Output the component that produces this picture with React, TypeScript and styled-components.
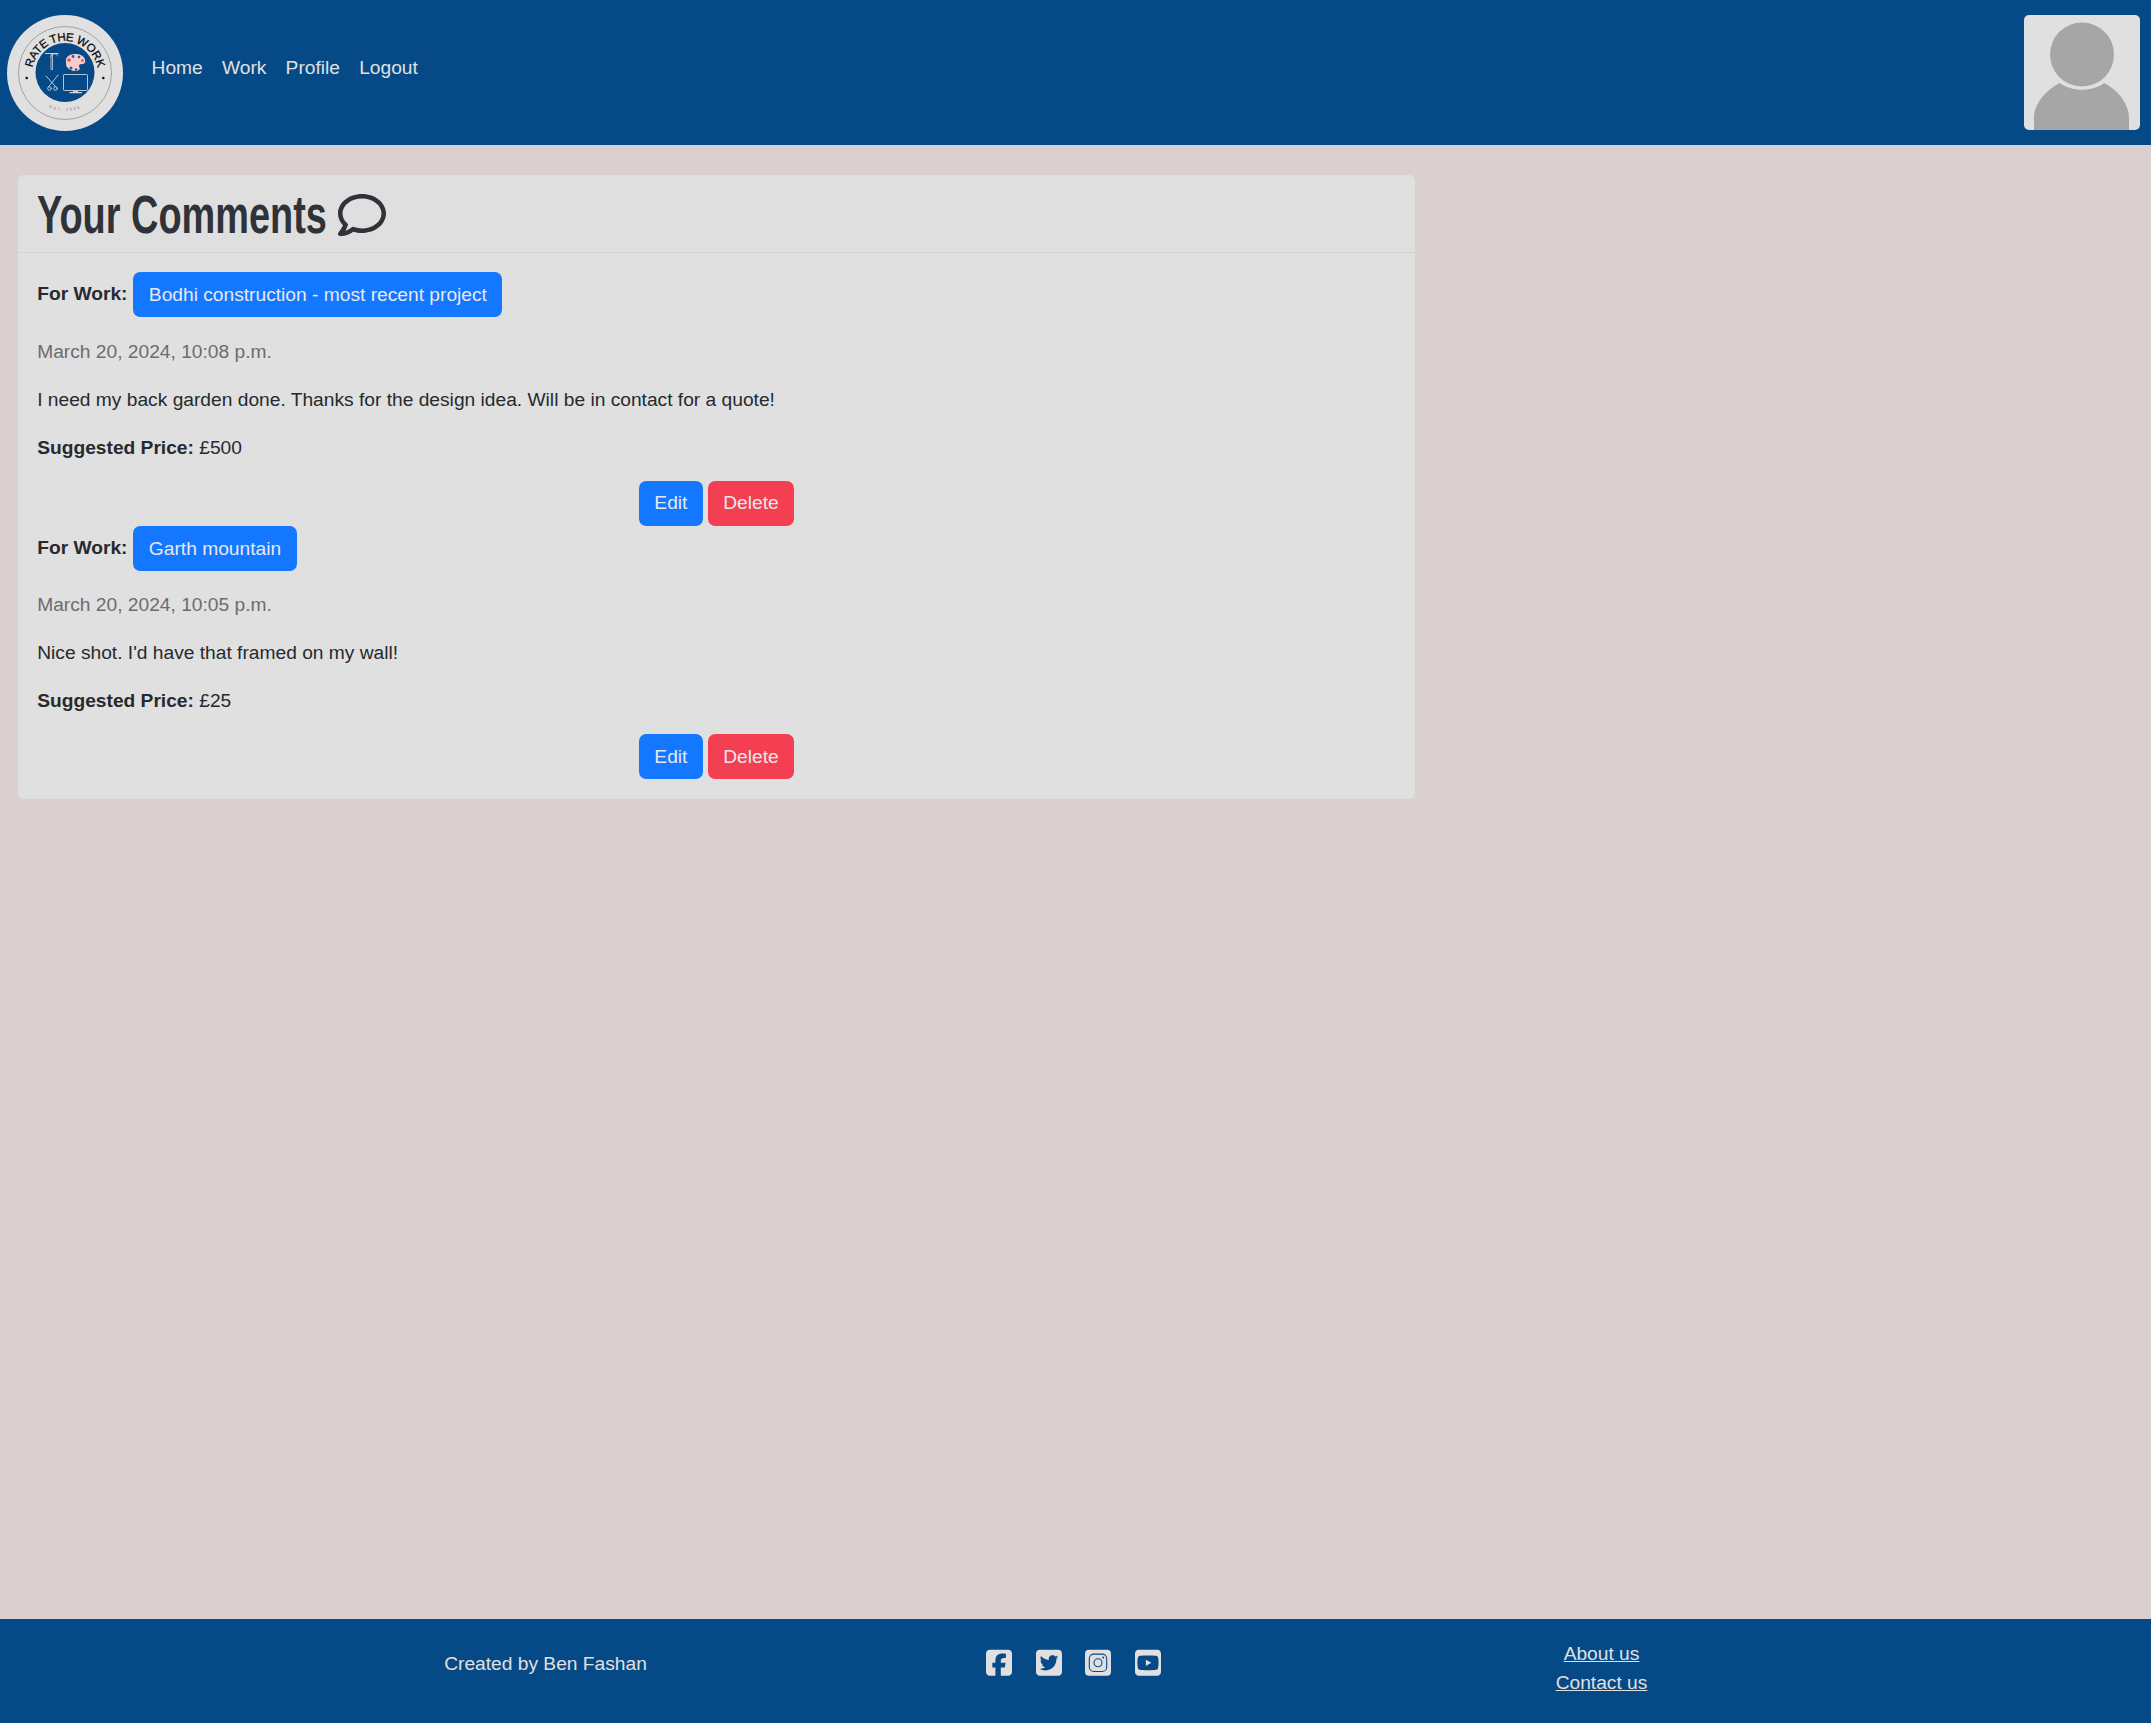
import React from "react";
import styled, { createGlobalStyle } from "styled-components";
import { FaRegComment } from "react-icons/fa";
import { FaSquareFacebook, FaSquareTwitter, FaSquareYoutube } from "react-icons/fa6";

const Global = createGlobalStyle`
  html, body { margin: 0; padding: 0; }
  body {
    background: #dbd0d0;
    font-family: "Liberation Sans", Arial, sans-serif;
    font-size: 19.2px;
    line-height: 1.5;
    color: #262a2e;
  }
  * { box-sizing: border-box; }
`;

const Page = styled.div`
  min-height: 1723px;
  display: flex;
  flex-direction: column;
`;

const Header = styled.header`
  height: 145px;
  background: #064987;
  display: flex;
  align-items: center;
  justify-content: space-between;
  padding: 0 11px 0 7px;
`;

const Brand = styled.div`
  display: flex;
  align-items: center;
`;

const LogoSvg = styled.svg`
  width: 116px;
  height: 116px;
  display: block;
`;

const Nav = styled.nav`
  display: flex;
  margin-left: 19px;
  padding-bottom: 9px;
`;

const NavLink = styled.a`
  color: #e0e0e0;
  padding: 0 9.6px;
  text-decoration: none;
`;

const Avatar = styled.svg`
  width: 116px;
  height: 115.5px;
  display: block;
  border-radius: 5px;
`;

const Main = styled.main`
  flex: 1;
  padding: 30px 0 0 18px;
`;

const Card = styled.section`
  width: 1397px;
  background: #e0e0e0;
  border-radius: 6px;
  overflow: hidden;
`;

const CardHeader = styled.div`
  height: 78px;
  display: flex;
  align-items: center;
  gap: 12px;
  padding: 3px 19.2px 0;
  background: #dfdfdf;
  border-bottom: 1px solid #d3d3d3;
`;

const Title = styled.h2`
  margin: 0;
  width: 289px;
  white-space: nowrap;
  font-family: "Liberation Sans", Arial, sans-serif;
  font-size: 53px;
  font-weight: 700;
  line-height: 1.2;
  color: #2f3238;
  transform: scaleX(0.715);
  transform-origin: left center;
`;

const CommentIcon = styled(FaRegComment)`
  width: 48px;
  height: 48px;
  color: #2f3238;
`;

const CardBody = styled.div`
  padding: 19.2px 19.2px 20.2px;
`;

const WorkRow = styled.div`
  display: flex;
  align-items: center;
  gap: 6px;
  margin-bottom: 20.2px;
`;

const Bold = styled.strong`
  font-weight: 700;
`;

const Button = styled.a<{ $variant: "primary" | "danger" }>`
  display: inline-block;
  padding: 8.8px 15.4px 7.6px;
  border-radius: 7.2px;
  color: #e8e8ee;
  text-decoration: none;
  background: ${(p) => (p.$variant === "primary" ? "#1477ff" : "#f43f52")};
`;

const Muted = styled.p`
  margin: 0 0 19.2px;
  color: #6c6c70;
`;

const Para = styled.p`
  margin: 0 0 19.2px;
`;

const Actions = styled.div`
  display: flex;
  justify-content: center;
  gap: 5px;
  margin-top: -1px;
`;

const Footer = styled.footer`
  height: 104px;
  background: #064987;
  color: #e0e0e0;
  display: flex;
  justify-content: center;
  padding-right: 4px;
`;

const FooterGrid = styled.div`
  width: 1584px;
  display: grid;
  grid-template-columns: repeat(3, 1fr);
  text-align: center;
`;

const Credit = styled.div`
  padding-top: 31px;
`;

const Socials = styled.div`
  padding-top: 29px;
  display: flex;
  justify-content: center;
  gap: 23.6px;
  color: #e0e0e0;
  svg {
    width: 26px;
    height: 29.7px;
    display: block;
  }
`;

const FooterLinks = styled.div`
  padding-top: 20px;
  display: flex;
  flex-direction: column;
  align-items: center;
  line-height: 29px;
`;

const FooterLink = styled.a`
  color: #e0e0e0;
  text-decoration: underline;
`;

const InstagramIcon = () => (
  <svg viewBox="0 0 26 29.7">
    <rect x="0" y="1.85" width="26" height="26" rx="4" fill="currentColor" />
    <rect x="4.3" y="6.1" width="17.4" height="17.4" rx="4.5" fill="none" stroke="#064987" strokeWidth="1.1" />
    <circle cx="13" cy="14.8" r="4" fill="none" stroke="#064987" strokeWidth="1.1" />
    <circle cx="18.2" cy="9.6" r="1" fill="#064987" />
  </svg>
);

const Logo = () => (
  <LogoSvg viewBox="0 0 116 116">
    <circle cx="58" cy="58" r="58" fill="#e0e0e0" />
    <circle cx="58" cy="58" r="46.5" fill="none" stroke="#777" strokeWidth="0.6" />
    <circle cx="58" cy="57.5" r="29.5" fill="#064987" />
    <defs>
      <path id="arcTop" d="M 25 59 A 33 33 0 0 1 91 59" />
      <path id="arcBottom" d="M 16 54 A 42 42 0 1 0 100 54" />
    </defs>
    <text fontFamily="Liberation Sans, sans-serif" fontSize="11.5" fill="#0a0a0a" stroke="#0a0a0a" strokeWidth="0.25" letterSpacing="-0.3">
      <textPath href="#arcTop" startOffset="50%" textAnchor="middle">RATE THE WORK</textPath>
    </text>
    <text fontFamily="Liberation Sans, sans-serif" fontSize="4" fill="#777" letterSpacing="1.6">
      <textPath href="#arcBottom" startOffset="50%" textAnchor="middle">EST. 2024</textPath>
    </text>
    <circle cx="19.7" cy="63" r="1.3" fill="#111" />
    <circle cx="96.3" cy="63" r="1.3" fill="#111" />
    <g stroke="#c9d2de" fill="none" strokeLinecap="round">
      <path d="M38.5 38.5 H51" strokeWidth="1.2" />
      <path d="M43.5 41.5 C46 38 49 38 51 41" strokeWidth="0.9" />
      <path d="M44 39 V54.5 H45.5 V39" strokeWidth="0.8" />
    </g>
    <path d="M59 46.5 C58 41 64 38.5 70 39 C77 39.5 79 45 78 47.5 C77 50 72 48 72 51 C72 53 74 53 72 55 C68 57.5 62 55 60 52 C59 51 59 48 59 46.5 Z" fill="#f7cdcd" />
    <g>
      <circle cx="66" cy="41.5" r="1.4" fill="#2d5aa8" />
      <circle cx="72" cy="42" r="1.3" fill="#2d5aa8" />
      <circle cx="62" cy="45" r="1.7" fill="#ef4444" />
      <circle cx="75.5" cy="45.5" r="1.3" fill="#ef4444" />
      <circle cx="64" cy="53" r="1.5" fill="#2d5aa8" />
      <circle cx="69" cy="54.5" r="1.3" fill="#2d5aa8" />
    </g>
    <g stroke="#c9d2de" fill="none" strokeWidth="0.9" strokeLinecap="round">
      <path d="M39 61 L49 72" />
      <path d="M51 60 L41.5 72" />
      <circle cx="42.5" cy="73.5" r="1.8" />
      <circle cx="48.5" cy="73.5" r="1.8" />
    </g>
    <rect x="56.5" y="59.5" width="24" height="16" rx="0.8" fill="none" stroke="#c9d2de" strokeWidth="0.9" />
    <path d="M66 75.5 H71 V77 H75 V78.2 H62.5 V77 H66 Z" fill="#c9d2de" />
  </LogoSvg>
);

const Profile = () => (
  <Avatar viewBox="0 0 116 115.5" preserveAspectRatio="none">
    <rect width="116" height="115.5" fill="#e0e0e0" />
    <circle cx="58" cy="39.5" r="32" fill="#a6a6a6" />
    <path d="M10 115.5 V103 C10 89 21 76 35.5 68 C48 77 68 77 80.5 68 C95 76 105 89 105 103 V115.5 Z" fill="#a6a6a6" />
  </Avatar>
);

const comments = [
  { work: "Bodhi construction - most recent project", date: "March 20, 2024, 10:08 p.m.", text: "I need my back garden done. Thanks for the design idea. Will be in contact for a quote!", price: "£500" },
  { work: "Garth mountain", date: "March 20, 2024, 10:05 p.m.", text: "Nice shot. I'd have that framed on my wall!", price: "£25" },
];

export default function App() {
  return (
    <Page>
      <Global />
      <Header>
        <Brand>
          <Logo />
          <Nav>
            <NavLink>Home</NavLink>
            <NavLink>Work</NavLink>
            <NavLink>Profile</NavLink>
            <NavLink>Logout</NavLink>
          </Nav>
        </Brand>
        <Profile />
      </Header>
      <Main>
        <Card>
          <CardHeader>
            <Title>Your Comments</Title>
            <CommentIcon />
          </CardHeader>
          <CardBody>
            {comments.map((c) => (
              <div key={c.work}>
                <WorkRow>
                  <Bold>For Work:</Bold>
                  <Button $variant="primary">{c.work}</Button>
                </WorkRow>
                <Muted>{c.date}</Muted>
                <Para>{c.text}</Para>
                <Para><Bold>Suggested Price:</Bold> {c.price}</Para>
                <Actions>
                  <Button $variant="primary">Edit</Button>
                  <Button $variant="danger">Delete</Button>
                </Actions>
              </div>
            ))}
          </CardBody>
        </Card>
      </Main>
      <Footer>
        <FooterGrid>
          <Credit>Created by Ben Fashan</Credit>
          <Socials>
            <FaSquareFacebook />
            <FaSquareTwitter />
            <InstagramIcon />
            <FaSquareYoutube />
          </Socials>
          <FooterLinks>
            <FooterLink>About us</FooterLink>
            <FooterLink>Contact us</FooterLink>
          </FooterLinks>
        </FooterGrid>
      </Footer>
    </Page>
  );
}
